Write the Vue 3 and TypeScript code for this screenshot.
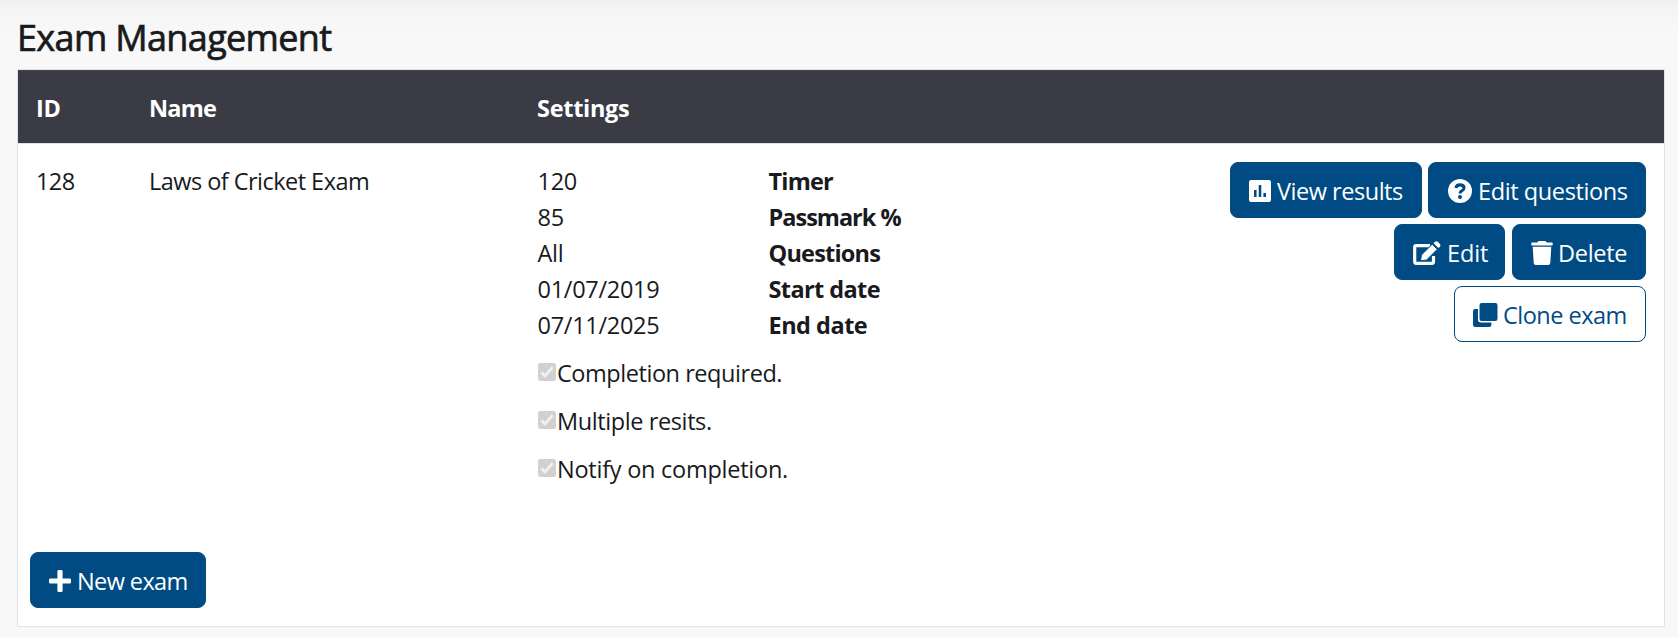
<script setup lang="ts">
interface Detail {
  value: string
  label: string
  key: string
}

const details: Detail[] = [
  { value: '120', label: 'Timer', key: 'timer' },
  { value: '85', label: 'Passmark %', key: 'passmark' },
  { value: 'All', label: 'Questions', key: 'questions' },
  { value: '01/07/2019', label: 'Start date', key: 'start' },
  { value: '07/11/2025', label: 'End date', key: 'end' },
]

const options: { text: string; key: string }[] = [
  { text: 'Completion required.', key: 'required' },
  { text: 'Multiple resits.', key: 'resits' },
  { text: 'Notify on completion.', key: 'notify' },
]
</script>

<template>
  <main class="page">
    <h1>Exam Management</h1>
    <section class="panel">
      <div class="row head">
        <div class="id">ID</div>
        <div class="name">Name</div>
        <div class="settings">Settings</div>
      </div>
      <div class="row body">
        <div class="cell id">128</div>
        <div class="cell name">Laws of Cricket Exam</div>
        <div class="cell settings">
          <dl>
            <div v-for="d in details" :key="d.key" class="detail">
              <dd>{{ d.value }}</dd>
              <dt :class="d.key">{{ d.label }}</dt>
            </div>
          </dl>
          <div v-for="o in options" :key="o.key" class="option" :class="o.key">
            <svg class="check" width="18" height="18" viewBox="0 0 18 18">
              <rect width="18" height="18" rx="2.5" fill="#d1d1d1" />
              <path d="M3.4 9.4 7 13 14.6 4.2" fill="none" stroke="#f1f1f1" stroke-width="2.7" />
            </svg>
            <span>{{ o.text }}</span>
          </div>
        </div>
        <div class="actions">
          <div class="line">
            <button class="btn view">
              <svg width="22" height="22" viewBox="0 0 22 22">
                <path fill="currentColor" fill-rule="evenodd" d="M2 0H20Q22 0 22 2V20Q22 22 20 22H2Q0 22 0 20V2Q0 0 2 0ZM5 10V17H7.6V10ZM9.7 5V17H12.3V5ZM14.4 13V17H17V13Z" />
              </svg>
              <span>View results</span>
            </button>
            <button class="btn ask">
              <svg width="24" height="24" viewBox="0 0 24 24">
                <circle cx="12" cy="12" r="12" fill="currentColor" />
                <path d="M8 9Q8.4 5.9 12 5.9Q16 5.9 16 9Q16 10.8 13.8 11.9Q12 12.8 12 14.4" fill="none" stroke="#004b83" stroke-width="3.1" />
                <circle cx="12" cy="18" r="2" fill="#004b83" />
              </svg>
              <span>Edit questions</span>
            </button>
          </div>
          <div class="line">
            <button class="btn edit">
              <svg width="28" height="24" viewBox="0 0 28 24">
                <path d="M17 4.6H3.2Q1.7 4.6 1.7 6.1V20.8Q1.7 22.3 3.2 22.3H19Q20.5 22.3 20.5 20.8V15" fill="none" stroke="currentColor" stroke-width="3.2" />
                <path d="M19.2 3.2 24.3 8.3 13.7 18.9 8.1 19.8Q7.5 19.8 7.6 19.2L8.4 14Z" fill="currentColor" stroke="#004b83" stroke-width="1" />
                <path d="M20.5 2.2 22 .7Q23.4-.4 24.8.8L26.9 2.9Q28 4.2 26.9 5.7L25.4 7.1Z" fill="currentColor" />
              </svg>
              <span>Edit</span>
            </button>
            <button class="btn delete">
              <svg width="22" height="24" viewBox="0 0 22 24">
                <path fill="currentColor" d="M1 1.4H6.2L7 .4Q7.3 0 7.9 0H14.1Q14.7 0 15 .4L15.8 1.4H21Q21.7 1.4 21.7 2V3.8Q21.7 4.5 21 4.5H1Q.3 4.5.3 3.8V2Q.3 1.4 1 1.4ZM1.7 5.7H20.3L19.3 22Q19.2 24 17.2 24H4.8Q2.8 24 2.7 22Z" />
              </svg>
              <span>Delete</span>
            </button>
          </div>
          <div class="line">
            <button class="btn clone">
              <svg width="25" height="24" viewBox="0 0 25 24">
                <path fill="currentColor" d="M8.7 0H22.3Q24.5 0 24.5 2.2V15.8Q24.5 18 22.3 18H8.7Q6.5 18 6.5 15.8V2.2Q6.5 0 8.7 0ZM2.2 6H5V16.5Q5 19.5 8 19.5H18.4V21.8Q18.4 24 16.2 24H2.2Q0 24 0 21.8V8.2Q0 6 2.2 6Z" />
              </svg>
              <span>Clone exam</span>
            </button>
          </div>
        </div>
      </div>
      <button class="btn new">
        <svg width="22" height="22" viewBox="0 0 22 22">
          <path fill="currentColor" d="M9.7 0H12.3Q13.6 0 13.6 1.3V8.4H20.7Q22 8.4 22 9.7V12.3Q22 13.6 20.7 13.6H13.6V20.7Q13.6 22 12.3 22H9.7Q8.4 22 8.4 20.7V13.6H1.3Q0 13.6 0 12.3V9.7Q0 8.4 1.3 8.4H8.4V1.3Q8.4 0 9.7 0Z" />
        </svg>
        <span>New exam</span>
      </button>
    </section>
  </main>
</template>

<style>
body {
  background: #f8f8f8;
}
</style>

<style scoped>
.page {
  box-sizing: border-box;
  height: 637px;
  padding: 16px 13px 10px 17px;
  overflow: hidden;
  background: linear-gradient(#f1f1f1, #f5f5f5 12px, #f8f8f8 32px);
  color: #181a1d;
  font: 23.5px/36px "Open Sans", "Noto Sans", sans-serif;
  letter-spacing: -0.4px;
}
h1 {
  height: 44px;
  margin: 0 0 9px;
  font-size: 36px;
  font-weight: 500;
  line-height: 44px;
  letter-spacing: -0.65px;
  -webkit-text-stroke: 0.7px currentColor;
}
.panel {
  box-sizing: border-box;
  display: flex;
  flex-direction: column;
  align-items: flex-start;
  height: 558px;
  border: 1px solid #e1e1ec;
  background: #fff;
}
.row {
  box-sizing: border-box;
  display: grid;
  grid-template-columns: 113px 388px 510px 1fr;
  width: 100%;
  padding: 18px 18px 0;
}
.head {
  height: 74px;
  padding-top: 20px;
  border-bottom: 1px solid #e1e1ec;
  background: #3b3b45;
  box-shadow: inset 0 1px #454554;
  color: #fff;
  font-weight: 700;
}
.body {
  height: 408px;
}
.cell {
  padding-top: 1px;
}
.head .name { letter-spacing: -0.8px; }
.head .settings { letter-spacing: -0.3px; }
.cell.name { letter-spacing: -0.53px; }
.cell.id { letter-spacing: -0.6px; }
dl, dd, dt {
  margin: 0;
}
.detail {
  display: grid;
  grid-template-columns: 231px 1fr;
  padding-left: 0.5px;
}
dd { letter-spacing: -0.28px; }
dt { font-weight: 700; }
.timer { letter-spacing: -0.8px; }
.passmark { letter-spacing: -1px; }
.questions { letter-spacing: -0.8px; }
.start { letter-spacing: -0.6px; }
.end { letter-spacing: -0.5px; }
.option {
  display: flex;
  margin-top: 12px;
}
.check {
  margin: 8px 1px 0 1px;
}
.required { letter-spacing: -0.45px; }
.resits { letter-spacing: -0.4px; }
.notify { letter-spacing: -0.25px; }
.actions {
  display: flex;
  flex-direction: column;
  gap: 6px;
}
.line {
  display: flex;
  justify-content: flex-end;
  gap: 6px;
}
.btn {
  box-sizing: border-box;
  display: flex;
  flex: none;
  align-items: center;
  gap: 5px;
  height: 56px;
  margin: 0;
  padding: 0 0 0 18px;
  border: 1px solid #004b83;
  border-radius: 8px;
  background: #004b83;
  color: #fff;
  font: inherit;
  letter-spacing: -0.4px;
  white-space: nowrap;
}
.btn svg {
  flex: none;
  margin-top: 2px;
}
.btn span {
  padding-top: 1px;
}
.view { width: 192px; gap: 6px; letter-spacing: -0.47px; }
.ask { width: 218px; padding-left: 19px; gap: 6px; }
.edit { width: 111px; gap: 6px; letter-spacing: -0.1px; }
.delete { width: 134px; margin-left: 1px; letter-spacing: -0.3px; }
.clone {
  width: 192px;
  gap: 5px;
  background: #fff;
  color: #004b83;
  letter-spacing: -0.52px;
}
.new { width: 176px; margin-left: 12px; gap: 6px; letter-spacing: -0.6px; }
</style>
